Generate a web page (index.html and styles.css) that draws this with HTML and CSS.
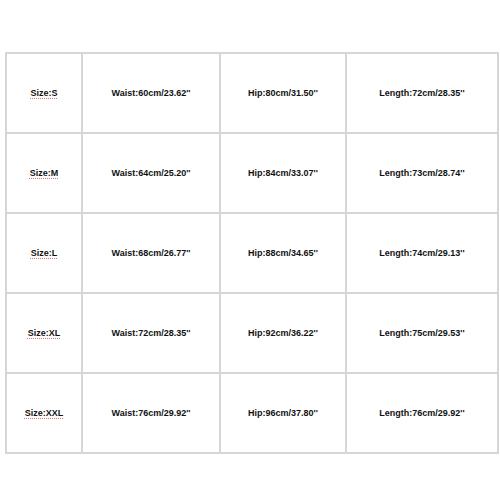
FILE: index.html
```html
<!DOCTYPE html>
<html>
<head>
<meta charset="utf-8">
<link rel="stylesheet" href="styles.css">
</head>
<body>
<div class="page">
  <table class="chart">
    <colgroup>
      <col class="c1"><col class="c2"><col class="c3"><col class="c4">
    </colgroup>
    <tr><td><span class="sz">Size:S</span></td><td>Waist:60cm/23.62''</td><td>Hip:80cm/31.50''</td><td>Length:72cm/28.35''</td></tr>
    <tr><td><span class="sz">Size:M</span></td><td>Waist:64cm/25.20''</td><td>Hip:84cm/33.07''</td><td>Length:73cm/28.74''</td></tr>
    <tr><td><span class="sz">Size:L</span></td><td>Waist:68cm/26.77''</td><td>Hip:88cm/34.65''</td><td>Length:74cm/29.13''</td></tr>
    <tr><td><span class="sz">Size:XL</span></td><td>Waist:72cm/28.35''</td><td>Hip:92cm/36.22''</td><td>Length:75cm/29.53''</td></tr>
    <tr><td><span class="sz">Size:XXL</span></td><td>Waist:76cm/29.92''</td><td>Hip:96cm/37.80''</td><td>Length:76cm/29.92''</td></tr>
  </table>
</div>
</body>
</html>
```
FILE: styles.css
```css
html, body {
  margin: 0;
  padding: 0;
  background: #fff;
}
.page {
  width: 500px;
  height: 500px;
  padding: 52px 0 0 5px;
  box-sizing: border-box;
}
.chart {
  border-collapse: collapse;
  table-layout: fixed;
  width: 492px;
  font-family: "Liberation Sans", Arial, sans-serif;
  font-weight: bold;
  font-size: 9px;
  color: #111;
  border-right: 2px solid #b8b8b8;
  border-bottom: 2px solid #b8b8b8;
}
.c1 { width: 76px; }
.c2 { width: 138px; }
.c3 { width: 126px; }
.c4 { width: 152px; }
.chart td {
  height: 78px;
  padding: 0;
  text-align: center;
  vertical-align: middle;
  border: 2px solid #d6d6d6;
}
.sz {
  text-decoration: underline dotted #e07070;
  text-decoration-thickness: 1px;
  text-underline-offset: 2px;
}
```
